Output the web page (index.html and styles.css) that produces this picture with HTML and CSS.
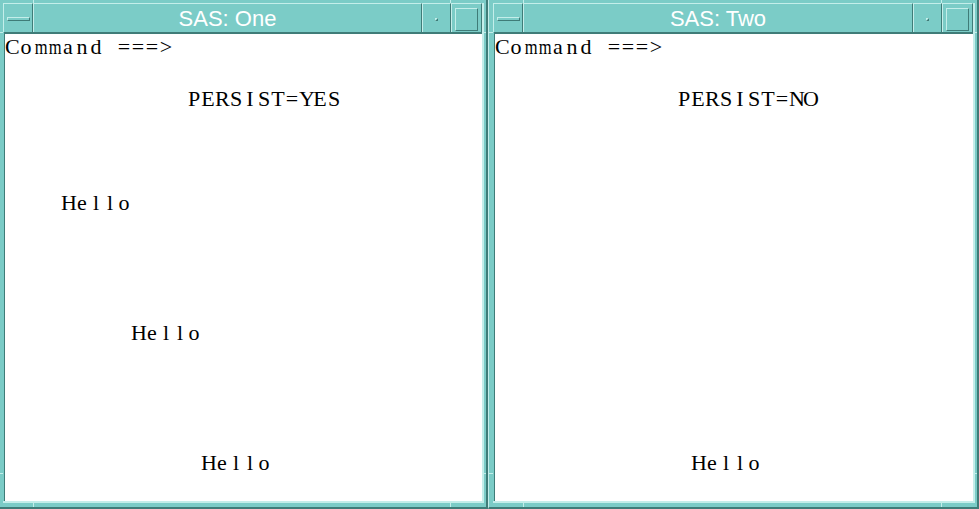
FILE: index.html
```html
<!DOCTYPE html>
<html lang="en">
<head>
    <meta charset="UTF-8">
    <title>SAS Windows</title>
    <link rel="stylesheet" href="styles.css">
</head>
<body>
    <div class="desktop">
        <div class="window window-one">
            <div class="inner">
                <div class="titlebar">
                    <div class="tb-part menu-btn"><span class="menu-bar"></span></div>
                    <div class="tb-part tb-title">SAS: One</div>
                    <div class="tb-part min-btn"><span class="min-dot"></span></div>
                    <div class="tb-part max-btn"><span class="max-box"></span></div>
                </div>
                <div class="screen">
                    <div class="row"><span class="c">C</span><span class="c">o</span><span class="c wide">m</span><span class="c wide">m</span><span class="c">a</span><span class="c">n</span><span class="c">d</span><span class="c">&nbsp;</span><span class="c">=</span><span class="c">=</span><span class="c">=</span><span class="c">&gt;</span></div>
                    <div class="row"></div>
                    <div class="row col-13"><span class="c">P</span><span class="c">E</span><span class="c">R</span><span class="c">S</span><span class="c">I</span><span class="c">S</span><span class="c">T</span><span class="c">=</span><span class="c">Y</span><span class="c">E</span><span class="c">S</span></div>
                    <div class="row"></div>
                    <div class="row"></div>
                    <div class="row"></div>
                    <div class="row col-4"><span class="c">H</span><span class="c">e</span><span class="c">l</span><span class="c">l</span><span class="c">o</span></div>
                    <div class="row"></div>
                    <div class="row"></div>
                    <div class="row"></div>
                    <div class="row"></div>
                    <div class="row col-9"><span class="c">H</span><span class="c">e</span><span class="c">l</span><span class="c">l</span><span class="c">o</span></div>
                    <div class="row"></div>
                    <div class="row"></div>
                    <div class="row"></div>
                    <div class="row"></div>
                    <div class="row col-14"><span class="c">H</span><span class="c">e</span><span class="c">l</span><span class="c">l</span><span class="c">o</span></div>
                </div>
            </div>
            <span class="mark mark-top-l"></span>
            <span class="mark mark-top-r"></span>
            <span class="mark mark-bot-l"></span>
            <span class="mark mark-bot-r"></span>
            <span class="mark mark-side mark-left-t"></span>
            <span class="mark mark-side mark-left-b"></span>
            <span class="mark mark-side mark-right-t"></span>
            <span class="mark mark-side mark-right-b"></span>
        </div>

        <div class="window window-two">
            <div class="inner">
                <div class="titlebar">
                    <div class="tb-part menu-btn"><span class="menu-bar"></span></div>
                    <div class="tb-part tb-title">SAS: Two</div>
                    <div class="tb-part min-btn"><span class="min-dot"></span></div>
                    <div class="tb-part max-btn"><span class="max-box"></span></div>
                </div>
                <div class="screen">
                    <div class="row"><span class="c">C</span><span class="c">o</span><span class="c wide">m</span><span class="c wide">m</span><span class="c">a</span><span class="c">n</span><span class="c">d</span><span class="c">&nbsp;</span><span class="c">=</span><span class="c">=</span><span class="c">=</span><span class="c">&gt;</span></div>
                    <div class="row"></div>
                    <div class="row col-13"><span class="c">P</span><span class="c">E</span><span class="c">R</span><span class="c">S</span><span class="c">I</span><span class="c">S</span><span class="c">T</span><span class="c">=</span><span class="c">N</span><span class="c">O</span></div>
                    <div class="row"></div>
                    <div class="row"></div>
                    <div class="row"></div>
                    <div class="row"></div>
                    <div class="row"></div>
                    <div class="row"></div>
                    <div class="row"></div>
                    <div class="row"></div>
                    <div class="row"></div>
                    <div class="row"></div>
                    <div class="row"></div>
                    <div class="row"></div>
                    <div class="row"></div>
                    <div class="row col-14"><span class="c">H</span><span class="c">e</span><span class="c">l</span><span class="c">l</span><span class="c">o</span></div>
                </div>
            </div>
            <span class="mark mark-top-l"></span>
            <span class="mark mark-top-r"></span>
            <span class="mark mark-bot-l"></span>
            <span class="mark mark-bot-r"></span>
            <span class="mark mark-side mark-left-t"></span>
            <span class="mark mark-side mark-left-b"></span>
            <span class="mark mark-side mark-right-t"></span>
            <span class="mark mark-side mark-right-b"></span>
        </div>
    </div>
</body>
</html>
```

FILE: styles.css
```css
body {
    margin: 0;
    height: 100vh;
    overflow: hidden;
    background: #7bccc7;
}
.desktop {
    display: flex;
    height: 509px;
    margin-left: -2px;
}
.window {
    position: relative;
    box-sizing: border-box;
    height: 509px;
    background: #7bccc7;
    border-left: 1px solid #c4eeea;
    border-right: 2px solid #3f7c78;
    border-bottom: 2px solid #3f7c78;
    padding: 3px 2px 4px 4px;
    display: flex;
}
.window-one {
    width: 490px;
}
.window-two {
    flex: 1;
}
.inner {
    flex: 1;
    display: flex;
    flex-direction: column;
    border-right: 2px solid #c4eeea;
    border-bottom: 2px solid #c4eeea;
}
.titlebar {
    display: flex;
    height: 29px;
}
.tb-part {
    box-sizing: border-box;
    border-top: 1px solid #c4eeea;
    border-left: 1px solid #c4eeea;
    border-right: 1px solid #3f7c78;
    display: flex;
    justify-content: center;
    align-items: flex-start;
}
.menu-btn {
    width: 30px;
    padding-top: 13px;
}
.menu-bar {
    box-sizing: border-box;
    width: 23px;
    height: 4px;
    border-top: 1px solid #c4eeea;
    border-left: 1px solid #c4eeea;
    border-bottom: 1px solid #3f7c78;
    border-right: 1px solid #3f7c78;
}
.tb-title {
    flex: 1;
    align-items: center;
    padding-top: 1px;
    color: #ffffff;
    font-family: "Liberation Sans", Arial, sans-serif;
    font-size: 22px;
}
.min-btn {
    width: 29px;
    padding-top: 14px;
}
.min-dot {
    box-sizing: border-box;
    width: 3px;
    height: 3px;
    border-top: 1px solid #c4eeea;
    border-left: 1px solid #c4eeea;
    border-bottom: 1px solid #3f7c78;
    border-right: 1px solid #3f7c78;
}
.max-btn {
    width: 31px;
    padding-top: 4px;
}
.max-box {
    box-sizing: border-box;
    width: 23px;
    height: 23px;
    border-top: 1px solid #c4eeea;
    border-left: 1px solid #c4eeea;
    border-bottom: 1px solid #3f7c78;
    border-right: 1px solid #3f7c78;
}
.screen {
    flex: 1;
    margin-left: 1px;
    background: #ffffff;
    border-top: 2px solid #3f7c78;
    border-left: 1px solid #3f7c78;
    font-family: "Liberation Serif", "Times New Roman", serif;
    font-size: 22px;
    color: #000000;
    overflow: hidden;
}
.row {
    height: 26px;
    line-height: 26px;
    white-space: nowrap;
}
.c {
    display: inline-block;
    width: 14px;
    text-align: center;
}
.wide {
    transform: scaleX(0.75);
}
.col-4 {
    padding-left: 56px;
}
.col-9 {
    padding-left: 126px;
}
.col-13 {
    padding-left: 182px;
}
.col-14 {
    padding-left: 196px;
}
.mark {
    position: absolute;
    background: #c4eeea;
    width: 1px;
    height: 3px;
}
.mark-top-l {
    top: 0;
    left: 34px;
}
.mark-top-r {
    top: 0;
    right: 35px;
}
.mark-bot-l {
    bottom: 0;
    left: 34px;
    height: 6px;
}
.mark-bot-r {
    bottom: 0;
    right: 35px;
    height: 6px;
}
.mark-side {
    width: 4px;
    height: 1px;
}
.mark-left-t {
    left: 0;
    top: 32px;
}
.mark-left-b {
    left: 0;
    bottom: 33px;
}
.mark-right-t {
    right: 0;
    top: 32px;
    width: 2px;
}
.mark-right-b {
    right: 0;
    bottom: 33px;
    width: 2px;
}
```
